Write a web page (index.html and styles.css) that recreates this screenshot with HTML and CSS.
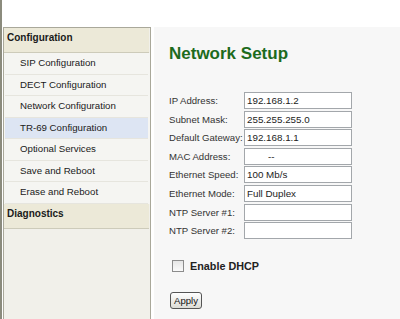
FILE: index.html
```html
<!DOCTYPE html>
<html lang="en">
<head>
    <meta charset="UTF-8">
    <title>Network Setup</title>
    <link rel="stylesheet" href="styles.css">
</head>
<body>
    <div class="frame">
        <div class="topbar"></div>
        <div class="main">
            <div class="sidebar">
                <div class="menu-head">Configuration</div>
                <ul class="menu">
                    <li>SIP Configuration</li>
                    <li>DECT Configuration</li>
                    <li>Network Configuration</li>
                    <li class="active">TR-69 Configuration</li>
                    <li>Optional Services</li>
                    <li>Save and Reboot</li>
                    <li>Erase and Reboot</li>
                </ul>
                <div class="menu-head">Diagnostics</div>
            </div>

            <div class="content">
                <h1>Network Setup</h1>
                <form class="net-form">
                    <label>IP Address:</label>
                    <input type="text" value="192.168.1.2">
                    <label>Subnet Mask:</label>
                    <input type="text" value="255.255.255.0">
                    <label>Default Gateway:</label>
                    <input type="text" value="192.168.1.1">
                    <label>MAC Address:</label>
                    <input type="text" class="mac" value="--">
                    <label>Ethernet Speed:</label>
                    <input type="text" value="100 Mb/s">
                    <label>Ethernet Mode:</label>
                    <input type="text" value="Full Duplex">
                    <label>NTP Server #1:</label>
                    <input type="text" value="">
                    <label>NTP Server #2:</label>
                    <input type="text" value="">
                </form>

                <div class="dhcp">
                    <input type="checkbox" id="dhcp">
                    <label for="dhcp">Enable DHCP</label>
                </div>

                <button class="apply">Apply</button>
            </div>
        </div>
    </div>
</body>
</html>
```

FILE: styles.css
```css
body {
    margin: 0;
    font-family: "Liberation Sans", Arial, sans-serif;
    background: #fff;
    color: #1a1a1a;
}

.frame {
    border-left: 2px solid #8b8b7d;
    height: 319px;
    box-sizing: border-box;
    display: flex;
    flex-direction: column;
    overflow: hidden;
}

.topbar {
    height: 27px;
    background: #fff;
}

.main {
    flex: 1;
    display: flex;
}

/* left menu */
.sidebar {
    margin-left: 1px;
    width: 146px;
    border: 1px solid #a9a89a;
    border-bottom: none;
    background: #f1f0ea;
}

.menu-head {
    height: 25px;
    box-sizing: border-box;
    padding: 4px 0 0 3px;
    line-height: 12px;
    font-size: 10px;
    font-weight: bold;
    background: #ece9d8;
    border-bottom: 1px solid #cdcbba;
    margin-right: 1px;
}

.menu {
    list-style: none;
    margin: 0;
    padding: 0;
    background: #f5f5f2;
}

.menu li {
    height: 20.5px;
    line-height: 20.5px;
    margin: 0 2px 0 1px;
    padding-left: 15px;
    font-size: 9.7px;
    border-bottom: 1px solid #e6e5de;
}

.menu li.active {
    background: #dde5f3;
}

/* main content */
.content {
    flex: 1;
    margin-left: 3px;
    background: #f7f7f7;
    padding: 17px 0 0 15px;
}

h1 {
    margin: 0;
    font-size: 17px;
    line-height: 20px;
    color: #1d6b1d;
}

.net-form {
    margin-top: 28px;
    display: grid;
    grid-template-columns: 75px 108px;
    grid-auto-rows: 17px;
    row-gap: 1.6px;
    align-items: center;
}

.net-form label {
    font-size: 9.6px;
    color: #333;
}

.net-form input {
    height: 17px;
    box-sizing: border-box;
    margin: 0;
    border: 1px solid #a3a7ab;
    background: #fff;
    padding: 0 2px;
    font-family: inherit;
    font-size: 9.8px;
    color: #222;
}

.net-form input.mac {
    padding-left: 23px;
}

.dhcp {
    margin-top: 21px;
    margin-left: 3px;
    display: flex;
    align-items: center;
    gap: 6px;
}

.dhcp input {
    appearance: none;
    width: 12px;
    height: 12px;
    margin: 0;
    border: 1px solid #8c8c8c;
    background: linear-gradient(#e6e6e6, #fafafa);
}

.dhcp label {
    font-size: 10.8px;
    font-weight: bold;
    color: #222;
}

.apply {
    margin-top: 20px;
    margin-left: 1px;
    width: 32px;
    height: 17px;
    padding: 0;
    font-family: inherit;
    font-size: 9.6px;
    color: #111;
    border: 1px solid #555;
    border-radius: 3px;
    background: linear-gradient(#ffffff, #dcdcd6);
}
```
